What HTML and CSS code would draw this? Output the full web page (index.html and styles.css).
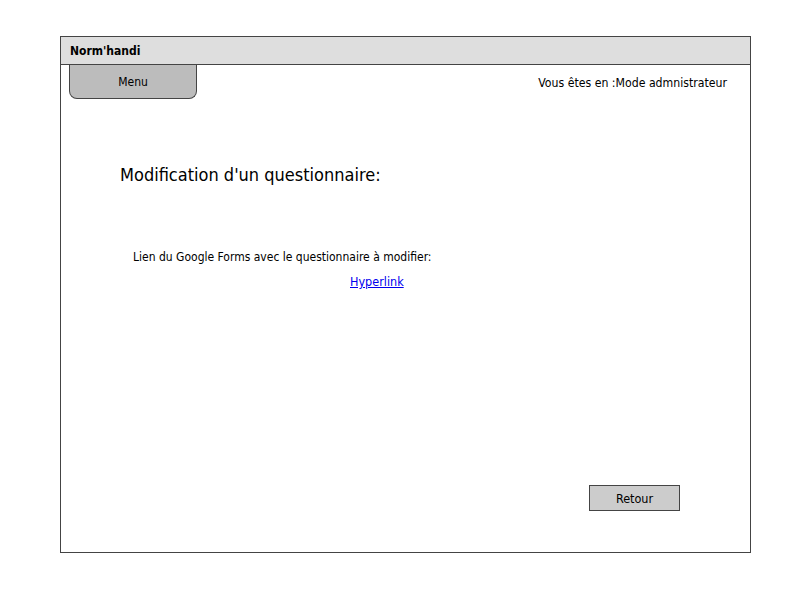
FILE: index.html
```html
<!DOCTYPE html>
<html lang="fr">
<head>
<meta charset="utf-8">
<title>Norm'handi</title>
<link rel="stylesheet" href="styles.css">
</head>
<body>
<div class="frame">
  <div class="titlebar">Norm'handi</div>
  <div class="toprow">
    <div class="menu-tab">Menu</div>
    <div class="status">Vous êtes en :Mode admnistrateur</div>
  </div>
  <h1 class="heading">Modification d'un questionnaire:</h1>
  <p class="label">Lien du Google Forms avec le questionnaire à modifier:</p>
  <p class="link-row"><a class="link" href="#">Hyperlink</a></p>
  <div class="spacer"></div>
  <div class="actions"><button class="btn">Retour</button></div>
</div>
</body>
</html>
```
FILE: styles.css
```css
* { box-sizing: border-box; }
html, body { margin: 0; padding: 0; background: #fff; }
body {
  font-family: "DejaVu Sans Condensed", "DejaVu Sans", sans-serif;
  color: #000;
}
.frame {
  margin: 36px 0 0 60px;
  width: 691px;
  height: 517px;
  border: 1px solid #444;
  display: flex;
  flex-direction: column;
}
.titlebar {
  height: 28px;
  background: #dedede;
  border-bottom: 1px solid #444;
  font-weight: bold;
  font-size: 12px;
  padding: 7px 0 0 9px;
}
.toprow {
  display: flex;
  justify-content: space-between;
  align-items: flex-start;
}
.menu-tab {
  margin-left: 8px;
  width: 128px;
  height: 34px;
  background: #bcbcbc;
  border: 1px solid #444;
  border-top: none;
  border-radius: 0 0 8px 8px;
  font-size: 12px;
  text-align: center;
  padding-top: 10px;
}
.status {
  font-size: 12.2px;
  padding: 11px 23px 0 0;
}
.heading {
  font-weight: normal;
  font-size: 18px;
  margin: 65px 0 0 59px;
}
.label {
  font-size: 12px;
  margin: 65px 0 0 72px;
}
.link-row {
  margin: 10px 0 0 289px;
  font-size: 12.5px;
}
.link { color: #0000ee; text-decoration: underline; }
.spacer { flex: 1; }
.actions {
  display: flex;
  justify-content: flex-end;
  padding: 0 70px 41px 0;
}
.btn {
  width: 91px;
  height: 26px;
  background: #cccccc;
  border: 1px solid #444;
  border-radius: 0;
  font-family: inherit;
  font-size: 12.5px;
  color: #000;
  padding: 0;
}
```
